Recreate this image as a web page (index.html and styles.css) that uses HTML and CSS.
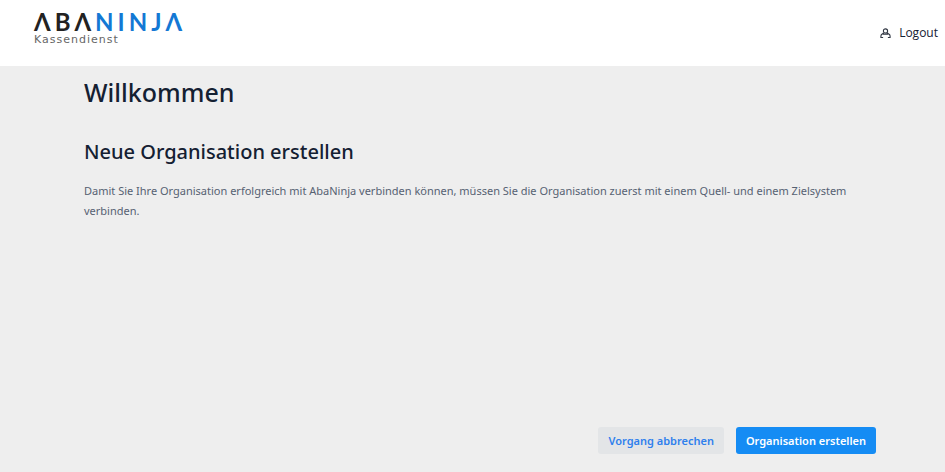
FILE: index.html
```html
<!DOCTYPE html>
<html lang="de">
<head>
<meta charset="utf-8">
<meta name="viewport" content="width=device-width, initial-scale=1">
<title>AbaNinja Kassendienst</title>
<link rel="stylesheet" href="styles.css">
</head>
<body>
<header class="topbar">
  <a class="brand" href="#" aria-label="AbaNinja Kassendienst">
    <span class="brand-name">ΛBΛ<span class="brand-accent">NINJΛ</span></span>
    <span class="brand-sub">Kassendienst</span>
  </a>
  <a class="logout" href="#">
    <svg class="logout-icon" viewBox="0 0 12 12" aria-hidden="true">
      <circle cx="6" cy="3.2" r="2.3"/>
      <path d="M4 5.2 2.4 6.6Q1 7.4 1 8.8v1.6h2.4M8 5.2 9.6 6.6q1.4.8 1.4 2.2v1.6H8.6M3.2 6.7h5.6"/>
    </svg>
    <span>Logout</span>
  </a>
</header>
<main class="content">
  <h1>Willkommen</h1>
  <h2>Neue Organisation erstellen</h2>
  <p>Damit Sie Ihre Organisation erfolgreich mit AbaNinja verbinden können, müssen Sie die Organisation zuerst mit einem Quell- und einem Zielsystem verbinden.</p>
  <div class="actions">
    <button type="button" class="btn btn-secondary">Vorgang abbrechen</button>
    <button type="button" class="btn btn-primary">Organisation erstellen</button>
  </div>
</main>
</body>
</html>
```
FILE: styles.css
```css
* {
  box-sizing: border-box;
}

body {
  display: flex;
  flex-direction: column;
  min-height: 100vh;
  margin: 0;
  background: #eeeeee;
  color: #142032;
  font-family: "Segoe UI", "Noto Sans", sans-serif;
  font-size: 11px;
}

.topbar {
  display: flex;
  justify-content: space-between;
  align-items: flex-start;
  padding: 12px 7px 18px 34px;
  background: #ffffff;
}

.brand {
  display: flex;
  flex-direction: column;
  color: #222222;
  text-decoration: none;
}

.brand-name {
  font-family: Lato, sans-serif;
  font-size: 24px;
  font-weight: 700;
  line-height: 20px;
  letter-spacing: 4px;
}

.brand-accent {
  color: #1478d4;
}

.brand-sub {
  color: #666666;
  font-family: "DejaVu Sans", sans-serif;
  font-size: 11px;
  line-height: 16px;
  letter-spacing: 1px;
}

.logout {
  display: flex;
  align-items: center;
  gap: 8px;
  margin-top: 13px;
  color: #142032;
  font-family: "Segoe UI", "Open Sans", sans-serif;
  font-size: 12px;
  line-height: 16px;
  text-decoration: none;
}

.logout-icon {
  width: 11px;
  height: 11px;
  fill: none;
  stroke: #303642;
  stroke-width: 1.2;
}

.content {
  display: flex;
  flex: 1;
  flex-direction: column;
  padding: 8px 69px 18px 84px;
}

h1,
h2,
p {
  margin: 0;
}

h1,
h2 {
  font-weight: 500;
}

h1 {
  font-size: 25px;
  line-height: 36px;
}

h2 {
  margin-top: 28px;
  font-size: 20px;
  line-height: 28px;
}

p {
  margin-top: 15px;
  color: #566172;
  line-height: 20px;
}

.actions {
  display: flex;
  justify-content: flex-end;
  gap: 12px;
  margin-top: auto;
}

.btn {
  padding: 0 10px;
  border: 0;
  border-radius: 3px;
  font: inherit;
  font-weight: 600;
  line-height: 27px;
}

.btn-secondary {
  background: #e3e5e7;
  color: #2f80ed;
}

.btn-primary {
  background: #158cf4;
  color: #ffffff;
}
```
